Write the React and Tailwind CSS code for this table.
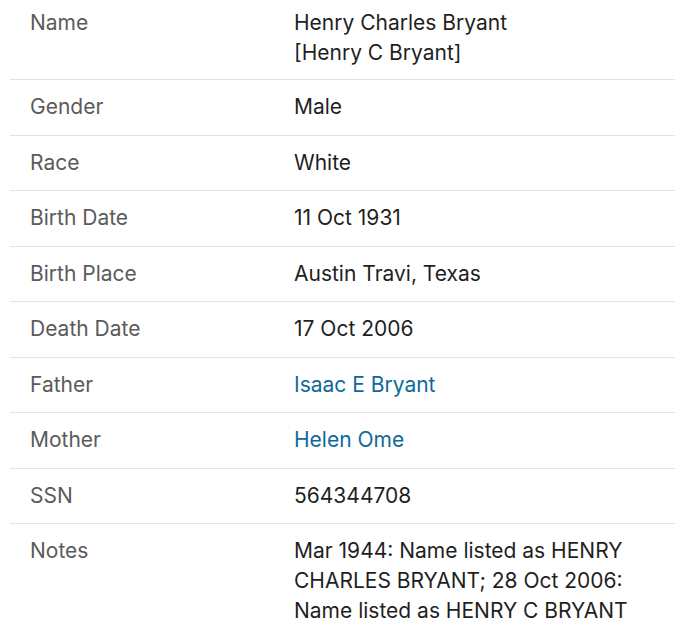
const rows = [
  { label: 'Name', value: ['Henry Charles Bryant', '[Henry C Bryant]'] },
  { label: 'Gender', value: ['Male'] },
  { label: 'Race', value: ['White'] },
  { label: 'Birth Date', value: ['11 Oct 1931'] },
  { label: 'Birth Place', value: ['Austin Travi, Texas'] },
  { label: 'Death Date', value: ['17 Oct 2006'] },
  { label: 'Father', value: ['Isaac E Bryant'], link: true },
  { label: 'Mother', value: ['Helen Ome'], link: true },
  { label: 'SSN', value: ['564344708'] },
  {
    label: 'Notes',
    value: ['Mar 1944: Name listed as HENRY CHARLES BRYANT; 28 Oct 2006: Name listed as HENRY C BRYANT'],
  },
]

export default function App() {
  return (
    <div className="min-h-[630px] bg-white pl-[10px] font-['Inter',sans-serif] text-[21px] leading-[30px]">
      {rows.map((row, i) => (
        <div
          key={row.label}
          className={`flex border-[#e3e3e3] ${i === 0 ? 'pt-[8px] pb-[11px]' : 'py-[12.25px]'} ${i < rows.length - 1 ? 'border-b' : ''}`}
        >
          <div className="w-[284px] shrink-0 pl-[20px] text-[#5b5b5b]">{row.label}</div>
          <div className={`w-[350px] ${row.link ? 'text-[#0e6a9b]' : 'text-[#1f1f1f]'}`}>
            {row.value.map((v) => (
              <div key={v}>{v}</div>
            ))}
          </div>
        </div>
      ))}
    </div>
  )
}
